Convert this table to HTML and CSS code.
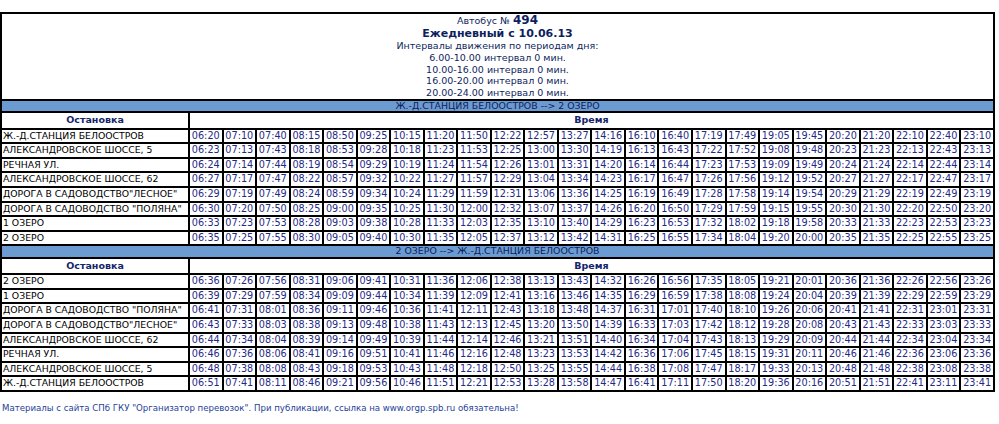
FILE: index.html
```html
<!DOCTYPE html>
<html lang="ru">
<head>
<meta charset="utf-8">
<title>Автобус № 494</title>
<link rel="stylesheet" href="styles.css">
</head>
<body>
<table class="schedule">
<colgroup><col class="col-stop"><col span="24"></colgroup>
<tr><td class="head-cell" colspan="25">
<div class="l-bus">Автобус № <b>494</b></div>
<div class="l-day">Ежедневный с 10.06.13</div>
<div class="l-int">Интервалы движения по периодам дня:</div>
<div class="l-int">6.00-10.00 интервал 0 мин.</div>
<div class="l-int">10.00-16.00 интервал 0 мин.</div>
<div class="l-int">16.00-20.00 интервал 0 мин.</div>
<div class="l-int">20.00-24.00 интервал 0 мин.</div>
</td></tr>
<tr><td class="dir" colspan="25">Ж.-Д.СТАНЦИЯ БЕЛООСТРОВ --&gt; 2 ОЗЕРО</td></tr>
<tr><td class="th">Остановка</td><td class="th" colspan="24">Время</td></tr>
<tr><td class="stop">Ж.-Д.СТАНЦИЯ БЕЛООСТРОВ</td><td class="t">06:20</td><td class="t">07:10</td><td class="t">07:40</td><td class="t">08:15</td><td class="t">08:50</td><td class="t">09:25</td><td class="t">10:15</td><td class="t">11:20</td><td class="t">11:50</td><td class="t">12:22</td><td class="t">12:57</td><td class="t">13:27</td><td class="t">14:16</td><td class="t">16:10</td><td class="t">16:40</td><td class="t">17:19</td><td class="t">17:49</td><td class="t">19:05</td><td class="t">19:45</td><td class="t">20:20</td><td class="t">21:20</td><td class="t">22:10</td><td class="t">22:40</td><td class="t">23:10</td></tr>
<tr><td class="stop">АЛЕКСАНДРОВСКОЕ ШОССЕ, 5</td><td class="t">06:23</td><td class="t">07:13</td><td class="t">07:43</td><td class="t">08:18</td><td class="t">08:53</td><td class="t">09:28</td><td class="t">10:18</td><td class="t">11:23</td><td class="t">11:53</td><td class="t">12:25</td><td class="t">13:00</td><td class="t">13:30</td><td class="t">14:19</td><td class="t">16:13</td><td class="t">16:43</td><td class="t">17:22</td><td class="t">17:52</td><td class="t">19:08</td><td class="t">19:48</td><td class="t">20:23</td><td class="t">21:23</td><td class="t">22:13</td><td class="t">22:43</td><td class="t">23:13</td></tr>
<tr><td class="stop">РЕЧНАЯ УЛ.</td><td class="t">06:24</td><td class="t">07:14</td><td class="t">07:44</td><td class="t">08:19</td><td class="t">08:54</td><td class="t">09:29</td><td class="t">10:19</td><td class="t">11:24</td><td class="t">11:54</td><td class="t">12:26</td><td class="t">13:01</td><td class="t">13:31</td><td class="t">14:20</td><td class="t">16:14</td><td class="t">16:44</td><td class="t">17:23</td><td class="t">17:53</td><td class="t">19:09</td><td class="t">19:49</td><td class="t">20:24</td><td class="t">21:24</td><td class="t">22:14</td><td class="t">22:44</td><td class="t">23:14</td></tr>
<tr><td class="stop">АЛЕКСАНДРОВСКОЕ ШОССЕ, 62</td><td class="t">06:27</td><td class="t">07:17</td><td class="t">07:47</td><td class="t">08:22</td><td class="t">08:57</td><td class="t">09:32</td><td class="t">10:22</td><td class="t">11:27</td><td class="t">11:57</td><td class="t">12:29</td><td class="t">13:04</td><td class="t">13:34</td><td class="t">14:23</td><td class="t">16:17</td><td class="t">16:47</td><td class="t">17:26</td><td class="t">17:56</td><td class="t">19:12</td><td class="t">19:52</td><td class="t">20:27</td><td class="t">21:27</td><td class="t">22:17</td><td class="t">22:47</td><td class="t">23:17</td></tr>
<tr><td class="stop">ДОРОГА В САДОВОДСТВО"ЛЕСНОЕ"</td><td class="t">06:29</td><td class="t">07:19</td><td class="t">07:49</td><td class="t">08:24</td><td class="t">08:59</td><td class="t">09:34</td><td class="t">10:24</td><td class="t">11:29</td><td class="t">11:59</td><td class="t">12:31</td><td class="t">13:06</td><td class="t">13:36</td><td class="t">14:25</td><td class="t">16:19</td><td class="t">16:49</td><td class="t">17:28</td><td class="t">17:58</td><td class="t">19:14</td><td class="t">19:54</td><td class="t">20:29</td><td class="t">21:29</td><td class="t">22:19</td><td class="t">22:49</td><td class="t">23:19</td></tr>
<tr><td class="stop">ДОРОГА В САДОВОДСТВО "ПОЛЯНА"</td><td class="t">06:30</td><td class="t">07:20</td><td class="t">07:50</td><td class="t">08:25</td><td class="t">09:00</td><td class="t">09:35</td><td class="t">10:25</td><td class="t">11:30</td><td class="t">12:00</td><td class="t">12:32</td><td class="t">13:07</td><td class="t">13:37</td><td class="t">14:26</td><td class="t">16:20</td><td class="t">16:50</td><td class="t">17:29</td><td class="t">17:59</td><td class="t">19:15</td><td class="t">19:55</td><td class="t">20:30</td><td class="t">21:30</td><td class="t">22:20</td><td class="t">22:50</td><td class="t">23:20</td></tr>
<tr><td class="stop">1 ОЗЕРО</td><td class="t">06:33</td><td class="t">07:23</td><td class="t">07:53</td><td class="t">08:28</td><td class="t">09:03</td><td class="t">09:38</td><td class="t">10:28</td><td class="t">11:33</td><td class="t">12:03</td><td class="t">12:35</td><td class="t">13:10</td><td class="t">13:40</td><td class="t">14:29</td><td class="t">16:23</td><td class="t">16:53</td><td class="t">17:32</td><td class="t">18:02</td><td class="t">19:18</td><td class="t">19:58</td><td class="t">20:33</td><td class="t">21:33</td><td class="t">22:23</td><td class="t">22:53</td><td class="t">23:23</td></tr>
<tr><td class="stop">2 ОЗЕРО</td><td class="t">06:35</td><td class="t">07:25</td><td class="t">07:55</td><td class="t">08:30</td><td class="t">09:05</td><td class="t">09:40</td><td class="t">10:30</td><td class="t">11:35</td><td class="t">12:05</td><td class="t">12:37</td><td class="t">13:12</td><td class="t">13:42</td><td class="t">14:31</td><td class="t">16:25</td><td class="t">16:55</td><td class="t">17:34</td><td class="t">18:04</td><td class="t">19:20</td><td class="t">20:00</td><td class="t">20:35</td><td class="t">21:35</td><td class="t">22:25</td><td class="t">22:55</td><td class="t">23:25</td></tr>
<tr><td class="dir" colspan="25">2 ОЗЕРО --&gt; Ж.-Д.СТАНЦИЯ БЕЛООСТРОВ</td></tr>
<tr><td class="th">Остановка</td><td class="th" colspan="24">Время</td></tr>
<tr><td class="stop">2 ОЗЕРО</td><td class="t">06:36</td><td class="t">07:26</td><td class="t">07:56</td><td class="t">08:31</td><td class="t">09:06</td><td class="t">09:41</td><td class="t">10:31</td><td class="t">11:36</td><td class="t">12:06</td><td class="t">12:38</td><td class="t">13:13</td><td class="t">13:43</td><td class="t">14:32</td><td class="t">16:26</td><td class="t">16:56</td><td class="t">17:35</td><td class="t">18:05</td><td class="t">19:21</td><td class="t">20:01</td><td class="t">20:36</td><td class="t">21:36</td><td class="t">22:26</td><td class="t">22:56</td><td class="t">23:26</td></tr>
<tr><td class="stop">1 ОЗЕРО</td><td class="t">06:39</td><td class="t">07:29</td><td class="t">07:59</td><td class="t">08:34</td><td class="t">09:09</td><td class="t">09:44</td><td class="t">10:34</td><td class="t">11:39</td><td class="t">12:09</td><td class="t">12:41</td><td class="t">13:16</td><td class="t">13:46</td><td class="t">14:35</td><td class="t">16:29</td><td class="t">16:59</td><td class="t">17:38</td><td class="t">18:08</td><td class="t">19:24</td><td class="t">20:04</td><td class="t">20:39</td><td class="t">21:39</td><td class="t">22:29</td><td class="t">22:59</td><td class="t">23:29</td></tr>
<tr><td class="stop">ДОРОГА В САДОВОДСТВО "ПОЛЯНА"</td><td class="t">06:41</td><td class="t">07:31</td><td class="t">08:01</td><td class="t">08:36</td><td class="t">09:11</td><td class="t">09:46</td><td class="t">10:36</td><td class="t">11:41</td><td class="t">12:11</td><td class="t">12:43</td><td class="t">13:18</td><td class="t">13:48</td><td class="t">14:37</td><td class="t">16:31</td><td class="t">17:01</td><td class="t">17:40</td><td class="t">18:10</td><td class="t">19:26</td><td class="t">20:06</td><td class="t">20:41</td><td class="t">21:41</td><td class="t">22:31</td><td class="t">23:01</td><td class="t">23:31</td></tr>
<tr><td class="stop">ДОРОГА В САДОВОДСТВО"ЛЕСНОЕ"</td><td class="t">06:43</td><td class="t">07:33</td><td class="t">08:03</td><td class="t">08:38</td><td class="t">09:13</td><td class="t">09:48</td><td class="t">10:38</td><td class="t">11:43</td><td class="t">12:13</td><td class="t">12:45</td><td class="t">13:20</td><td class="t">13:50</td><td class="t">14:39</td><td class="t">16:33</td><td class="t">17:03</td><td class="t">17:42</td><td class="t">18:12</td><td class="t">19:28</td><td class="t">20:08</td><td class="t">20:43</td><td class="t">21:43</td><td class="t">22:33</td><td class="t">23:03</td><td class="t">23:33</td></tr>
<tr><td class="stop">АЛЕКСАНДРОВСКОЕ ШОССЕ, 62</td><td class="t">06:44</td><td class="t">07:34</td><td class="t">08:04</td><td class="t">08:39</td><td class="t">09:14</td><td class="t">09:49</td><td class="t">10:39</td><td class="t">11:44</td><td class="t">12:14</td><td class="t">12:46</td><td class="t">13:21</td><td class="t">13:51</td><td class="t">14:40</td><td class="t">16:34</td><td class="t">17:04</td><td class="t">17:43</td><td class="t">18:13</td><td class="t">19:29</td><td class="t">20:09</td><td class="t">20:44</td><td class="t">21:44</td><td class="t">22:34</td><td class="t">23:04</td><td class="t">23:34</td></tr>
<tr><td class="stop">РЕЧНАЯ УЛ.</td><td class="t">06:46</td><td class="t">07:36</td><td class="t">08:06</td><td class="t">08:41</td><td class="t">09:16</td><td class="t">09:51</td><td class="t">10:41</td><td class="t">11:46</td><td class="t">12:16</td><td class="t">12:48</td><td class="t">13:23</td><td class="t">13:53</td><td class="t">14:42</td><td class="t">16:36</td><td class="t">17:06</td><td class="t">17:45</td><td class="t">18:15</td><td class="t">19:31</td><td class="t">20:11</td><td class="t">20:46</td><td class="t">21:46</td><td class="t">22:36</td><td class="t">23:06</td><td class="t">23:36</td></tr>
<tr><td class="stop">АЛЕКСАНДРОВСКОЕ ШОССЕ, 5</td><td class="t">06:48</td><td class="t">07:38</td><td class="t">08:08</td><td class="t">08:43</td><td class="t">09:18</td><td class="t">09:53</td><td class="t">10:43</td><td class="t">11:48</td><td class="t">12:18</td><td class="t">12:50</td><td class="t">13:25</td><td class="t">13:55</td><td class="t">14:44</td><td class="t">16:38</td><td class="t">17:08</td><td class="t">17:47</td><td class="t">18:17</td><td class="t">19:33</td><td class="t">20:13</td><td class="t">20:48</td><td class="t">21:48</td><td class="t">22:38</td><td class="t">23:08</td><td class="t">23:38</td></tr>
<tr><td class="stop">Ж.-Д.СТАНЦИЯ БЕЛООСТРОВ</td><td class="t">06:51</td><td class="t">07:41</td><td class="t">08:11</td><td class="t">08:46</td><td class="t">09:21</td><td class="t">09:56</td><td class="t">10:46</td><td class="t">11:51</td><td class="t">12:21</td><td class="t">12:53</td><td class="t">13:28</td><td class="t">13:58</td><td class="t">14:47</td><td class="t">16:41</td><td class="t">17:11</td><td class="t">17:50</td><td class="t">18:20</td><td class="t">19:36</td><td class="t">20:16</td><td class="t">20:51</td><td class="t">21:51</td><td class="t">22:41</td><td class="t">23:11</td><td class="t">23:41</td></tr>
</table>
<p class="footer">Материалы с сайта СПб ГКУ "Организатор перевозок". При публикации, ссылка на www.orgp.spb.ru обязательна!</p>
</body>
</html>
```

FILE: styles.css
```css
body {
  margin: 0;
  padding-top: 12px;
  background: #fff;
  font-family: "DejaVu Sans", Verdana, sans-serif;
}

.schedule {
  width: 995px;
  table-layout: fixed;
  border-collapse: separate;
  border-spacing: 0;
  border: 1px solid #000;
}

.col-stop {
  width: 188px;
}

.schedule td {
  border: 1px solid #000;
  padding: 0;
  font-size: 9.7px;
  line-height: 12.6px;
  white-space: nowrap;
  overflow: hidden;
}

.head-cell {
  text-align: center;
  color: #0f1f5e;
}

.l-bus {
  font-size: 9.5px;
  line-height: 13px;
}

.l-bus b {
  font-size: 12px;
}

.l-day {
  font-size: 11px;
  font-weight: bold;
  line-height: 13px;
}

.l-int {
  font-size: 9.5px;
  line-height: 11.8px;
}

.schedule td.dir {
  background: #6c9bd2;
  color: #0d1d5a;
  text-align: center;
  font-size: 9.4px;
  line-height: 10.3px;
}

.schedule td.th {
  font-weight: bold;
  color: #14246b;
  text-align: center;
  font-size: 9.5px;
  line-height: 14.4px;
}

.schedule td.stop {
  color: #000;
  font-size: 9.3px;
  padding-left: 1px;
}

.schedule td.t {
  color: #1f2a85;
  text-align: center;
}

.footer {
  margin: 10px 0 0 2px;
  font-size: 8.6px;
  line-height: 12px;
  color: #26429a;
}
```
